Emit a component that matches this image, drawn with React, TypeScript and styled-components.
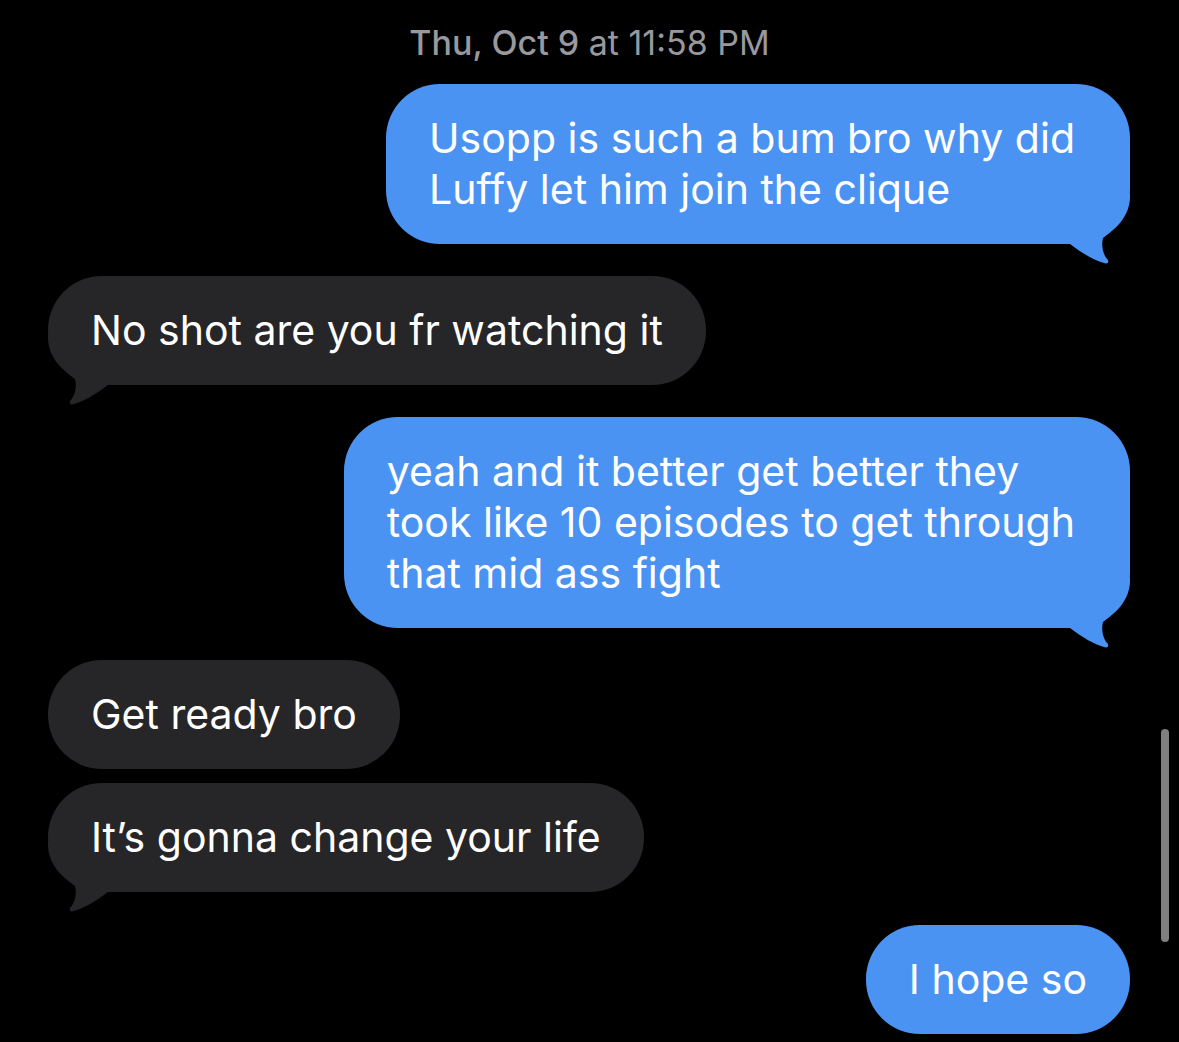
import React from 'react'
import styled, { createGlobalStyle } from 'styled-components'

type Side = 'me' | 'them'

type Message = {
  side: Side
  lines: string[]
  tail: boolean
  gap: number
}

const BLUE = '#4b93f3'
const GREY = '#262629'

const messages: Message[] = [
  {
    side: 'me',
    lines: ['Usopp is such a bum bro why did', 'Luffy let him join the clique'],
    tail: true,
    gap: 0,
  },
  {
    side: 'them',
    lines: ['No shot are you fr watching it'],
    tail: true,
    gap: 32,
  },
  {
    side: 'me',
    lines: [
      'yeah and it better get better they',
      'took like 10 episodes to get through',
      'that mid ass fight',
    ],
    tail: true,
    gap: 32,
  },
  { side: 'them', lines: ['Get ready bro'], tail: false, gap: 32 },
  {
    side: 'them',
    lines: ['It\u2019s gonna change your life'],
    tail: true,
    gap: 14,
  },
  { side: 'me', lines: ['I hope so'], tail: false, gap: 33 },
]

const GlobalStyle = createGlobalStyle`
  html, body {
    margin: 0;
    padding: 0;
    background: #000;
  }
  body {
    font-family: Inter, "Noto Sans", "Liberation Sans", sans-serif;
    -webkit-font-smoothing: antialiased;
  }
`

const Screen = styled('div')`
  position: relative;
  width: 1179px;
  height: 1042px;
  overflow: hidden;
  background: #000;
`

const Header = styled('div')`
  height: 84px;
  display: flex;
  align-items: center;
  justify-content: center;
  color: #98989e;
  font-size: 34px;
  white-space: pre;
`

const Day = styled('span')`
  font-weight: 500;
`

const Thread = styled('div')`
  display: flex;
  flex-direction: column;
  padding: 0 49px 0 48px;
`

const Row = styled('div')<{ $side: Side; $gap: number }>`
  display: flex;
  justify-content: ${(p) => (p.$side === 'me' ? 'flex-end' : 'flex-start')};
  margin-top: ${(p) => p.$gap}px;
`

const Bubble = styled('div')<{ $side: Side; $wrapped: boolean }>`
  position: relative;
  padding: 29px ${(p) => (p.$wrapped ? 55 : 43)}px 29px 43px;
  border-radius: 54px;
  background: ${(p) => (p.$side === 'me' ? BLUE : GREY)};
  color: #fff;
  font-size: 41px;
  line-height: 51px;
  white-space: nowrap;
`

const Text = styled('span')`
  position: relative;
  z-index: 1;
`

const Tail = styled('svg')<{ $side: Side }>`
  position: absolute;
  bottom: -20px;
  width: 60px;
  height: 70px;
  ${(p) =>
    p.$side === 'me'
      ? 'right: 0;'
      : 'left: 0; transform: scaleX(-1);'}
`

const Scrollbar = styled('div')`
  position: absolute;
  left: 1161px;
  top: 729px;
  width: 8px;
  height: 213px;
  border-radius: 4px;
  background: #7f7f7f;
`

function BubbleTail(props: { side: Side }) {
  return (
    <Tail $side={props.side} viewBox="0 0 60 70">
      <path
        d="M0 0 H60 V4 C59 24 45 35 33 44 C31 52 33 61 38 66 C39 69 37 70 34 69 C24 66 13 60 0 50 Z"
        fill={props.side === 'me' ? BLUE : GREY}
      />
    </Tail>
  )
}

export default function App() {
  return (
    <Screen>
      <GlobalStyle />
      <Header>
        <Day>Thu, Oct 9</Day>
        <span> at 11:58 PM</span>
      </Header>
      <Thread>
        {messages.map((m, i) => (
          <Row key={i} $side={m.side} $gap={m.gap}>
            <Bubble $side={m.side} $wrapped={m.lines.length > 1}>
              {m.tail && <BubbleTail side={m.side} />}
              <Text>
                {m.lines.map((line, j) => (
                  <React.Fragment key={j}>
                    {j > 0 && <br />}
                    {line}
                  </React.Fragment>
                ))}
              </Text>
            </Bubble>
          </Row>
        ))}
      </Thread>
      <Scrollbar />
    </Screen>
  )
}
